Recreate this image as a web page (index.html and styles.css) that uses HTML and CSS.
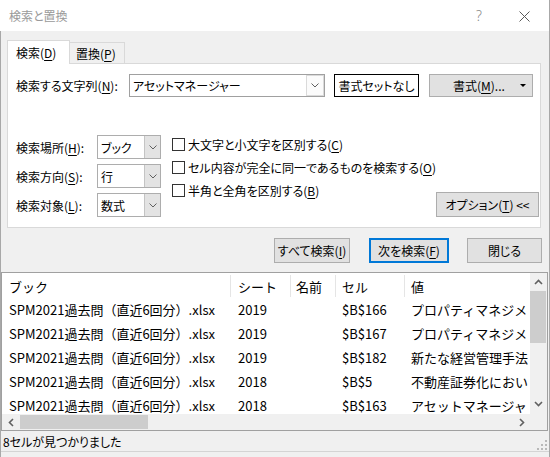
FILE: index.html
```html
<!DOCTYPE html>
<html lang="ja">
<head>
<meta charset="utf-8">
<title>検索と置換</title>
<link rel="stylesheet" href="styles.css">
</head>
<body>
<div class="window">
  <div class="titlebar">
    <span class="title">検索と置換</span>
    <span class="help">?</span>
    <span class="close"><svg width="11" height="11" viewBox="0 0 11 11"><path d="M0.5 0.5L10.5 10.5M10.5 0.5L0.5 10.5" stroke="#5a5a5a" stroke-width="1" fill="none"/></svg></span>
  </div>
  <div class="frame">
    <div class="dialog">
      <div class="tabs">
        <div class="tab active">検索(<u>D</u>)</div>
        <div class="tab">置換(<u>P</u>)</div>
      </div>
      <div class="panel">
        <div class="find-row">
          <span class="find-label">検索する文字列(<u>N</u>):</span>
          <div class="combo combo-find">
            <span class="combo-text">アセットマネージャー</span>
            <span class="combo-btn"><svg width="8" height="5" viewBox="0 0 8 5"><polyline points="0.5,0.5 4,4 7.5,0.5" stroke="#606060" stroke-width="1" fill="none"/></svg></span>
          </div>
          <button class="btn btn-noformat">書式セットなし</button>
          <button class="btn btn-format"><span class="fmt-text">書式(<u>M</u>)...</span><svg class="fmt-tri" width="6" height="3" viewBox="0 0 6 3"><polygon points="0,0 6,0 3,3" fill="#000"/></svg></button>
        </div>
        <div class="options">
          <div class="selects">
            <span class="sel-label">検索場所(<u>H</u>):</span>
            <div class="combo combo-sm"><span class="combo-text">ブック</span><span class="combo-btn"><svg width="8" height="5" viewBox="0 0 8 5"><polyline points="0.5,0.5 4,4 7.5,0.5" stroke="#606060" stroke-width="1" fill="none"/></svg></span></div>
            <span class="sel-label">検索方向(<u>S</u>):</span>
            <div class="combo combo-sm"><span class="combo-text">行</span><span class="combo-btn"><svg width="8" height="5" viewBox="0 0 8 5"><polyline points="0.5,0.5 4,4 7.5,0.5" stroke="#606060" stroke-width="1" fill="none"/></svg></span></div>
            <span class="sel-label">検索対象(<u>L</u>):</span>
            <div class="combo combo-sm"><span class="combo-text">数式</span><span class="combo-btn"><svg width="8" height="5" viewBox="0 0 8 5"><polyline points="0.5,0.5 4,4 7.5,0.5" stroke="#606060" stroke-width="1" fill="none"/></svg></span></div>
          </div>
          <div class="checks">
            <div class="check"><span class="box"></span>大文字と小文字を区別する(<u>C</u>)</div>
            <div class="check"><span class="box"></span>セル内容が完全に同一であるものを検索する(<u>O</u>)</div>
            <div class="check"><span class="box"></span>半角と全角を区別する(<u>B</u>)</div>
          </div>
          <button class="btn btn-options">オプション(<u>T</u>) &lt;&lt;</button>
        </div>
      </div>
      <div class="actions">
        <button class="btn btn-all">すべて検索(<u>I</u>)</button>
        <button class="btn btn-next">次を検索(<u>F</u>)</button>
        <button class="btn btn-close">閉じる</button>
      </div>
    </div>
    <div class="results">
      <div class="list-area">
        <div class="list-content">
          <div class="lrow lhead">
            <span class="c1">ブック</span><span class="c2">シート</span><span class="c3">名前</span><span class="c4">セル</span><span class="c5">値</span>
          </div>
          <div class="lrow">
            <span class="c1">SPM2021過去問（直近6回分）.xlsx</span><span class="c2">2019</span><span class="c3"></span><span class="c4">$B$166</span><span class="c5">プロパティマネジメ</span>
          </div>
          <div class="lrow">
            <span class="c1">SPM2021過去問（直近6回分）.xlsx</span><span class="c2">2019</span><span class="c3"></span><span class="c4">$B$167</span><span class="c5">プロパティマネジメ</span>
          </div>
          <div class="lrow">
            <span class="c1">SPM2021過去問（直近6回分）.xlsx</span><span class="c2">2019</span><span class="c3"></span><span class="c4">$B$182</span><span class="c5">新たな経営管理手法</span>
          </div>
          <div class="lrow">
            <span class="c1">SPM2021過去問（直近6回分）.xlsx</span><span class="c2">2018</span><span class="c3"></span><span class="c4">$B$5</span><span class="c5">不動産証券化におい</span>
          </div>
          <div class="lrow">
            <span class="c1">SPM2021過去問（直近6回分）.xlsx</span><span class="c2">2018</span><span class="c3"></span><span class="c4">$B$163</span><span class="c5">アセットマネージャ</span>
          </div>
        </div>
        <div class="vscroll">
          <span class="sarrow"><svg width="9" height="6" viewBox="0 0 9 6"><polyline points="1,5 4.5,1.5 8,5" stroke="#606060" stroke-width="1.6" fill="none"/></svg></span>
          <span class="vthumb"></span>
          <span class="sarrow sarrow-down"><svg width="9" height="6" viewBox="0 0 9 6"><polyline points="1,1 4.5,4.5 8,1" stroke="#606060" stroke-width="1.6" fill="none"/></svg></span>
        </div>
      </div>
      <div class="hscroll-row">
        <div class="hscroll">
          <span class="harrow"><svg width="6" height="9" viewBox="0 0 6 9"><polyline points="5,1 1.5,4.5 5,8" stroke="#606060" stroke-width="1.6" fill="none"/></svg></span>
          <span class="hthumb"></span>
          <span class="harrow harrow-right"><svg width="6" height="9" viewBox="0 0 6 9"><polyline points="1,1 4.5,4.5 1,8" stroke="#606060" stroke-width="1.6" fill="none"/></svg></span>
        </div>
        <div class="corner"></div>
      </div>
    </div>
    <div class="status">
      <span class="status-text">8セルが見つかりました</span>
      <svg class="grip" width="10" height="10" viewBox="0 0 10 10">
        <rect x="8" y="0" width="2" height="2" fill="#b8b8b8"/>
        <rect x="4" y="4" width="2" height="2" fill="#b8b8b8"/>
        <rect x="8" y="4" width="2" height="2" fill="#b8b8b8"/>
        <rect x="0" y="8" width="2" height="2" fill="#b8b8b8"/>
        <rect x="4" y="8" width="2" height="2" fill="#b8b8b8"/>
        <rect x="8" y="8" width="2" height="2" fill="#b8b8b8"/>
      </svg>
    </div>
  </div>
</div>
</body>
</html>
```
FILE: styles.css
```css
* { box-sizing: border-box; }
html, body { margin: 0; padding: 0; }
body {
  width: 550px;
  height: 457px;
  overflow: hidden;
  background: #f0f0f0;
  font-family: "Noto Sans CJK JP", "Noto Sans", sans-serif;
  font-size: 12px;
  color: #000;
  font-feature-settings: "palt";
}
u { text-decoration: underline; text-underline-offset: 2px; text-decoration-thickness: 1px; }

.window {
  width: 550px;
  height: 457px;
  border-right: 1px solid #a8a8a8;
  display: flex;
  flex-direction: column;
}

.titlebar {
  height: 31px;
  flex: none;
  background: #fff;
  display: flex;
  align-items: center;
  padding-left: 9px;
}
.title { color: #9a9a9a; font-size: 12px; }
.help {
  margin-left: auto;
  width: 14px;
  text-align: center;
  color: #8a8a8a;
  font-family: "Noto Sans", sans-serif;
  font-size: 14px;
  font-weight: 300;
  margin-right: 33px;
}
.close { display: flex; width: 11px; height: 11px; margin-right: 19px; margin-top: 1px; }

.frame {
  flex: 1;
  border-left: 1px solid #a8a8a8;
  display: flex;
  flex-direction: column;
  min-height: 0;
}
.dialog { padding: 9px 8px 0 6px; }

.tabs { display: flex; align-items: flex-end; height: 23px; }
.tab {
  height: 21px;
  border: 1px solid #d9d9d9;
  border-bottom: none;
  background: #f0f0f0;
  display: flex;
  align-items: center;
  padding-left: 8px;
  width: 63px;
}
.tab.active {
  height: 24px;
  margin-bottom: -1px;
  background: #fff;
  position: relative;
  z-index: 1;
}
.tab + .tab { border-left: none; width: 55px; padding-left: 6px; padding-top: 1px; }

.panel {
  background: #fff;
  border: 1px solid #d9d9d9;
  height: 165px;
  padding: 10px 0 0 8px;
}

.find-row { display: flex; align-items: center; height: 23px; }
.find-label { width: 113px; flex: none; }

.combo {
  display: flex;
  align-items: stretch;
  background: #fff;
  border: 1px solid #a0a0a0;
  flex: none;
}
.combo-text { flex: 1; display: flex; align-items: center; padding-left: 3px; white-space: nowrap; overflow: hidden; }
.combo-btn { display: flex; align-items: center; justify-content: center; }
.combo-find { width: 196px; height: 23px; }
.combo-find .combo-btn { width: 18px; border: 1px solid #dadada; background: #fbfbfb; }
.combo-sm { width: 64px; height: 24px; border-color: #adadad; }
.combo-sm .combo-btn { width: 16px; background: #e3e3e3; border-left: 1px solid #c4c4c4; }

.btn {
  font-family: inherit;
  font-size: 12px;
  font-feature-settings: "palt";
  color: #000;
  padding: 0;
  margin: 0;
  background: #e1e1e1;
  border: 1px solid #adadad;
  display: flex;
  align-items: center;
  justify-content: center;
  flex: none;
}
.btn-noformat { margin-left: 9px; width: 85px; height: 23px; background: #fff; border-color: #000; }
.btn-format { margin-left: 10px; width: 104px; height: 23px; justify-content: flex-start; padding-left: 23px; }
.fmt-tri { margin-left: auto; margin-right: 6px; }

.options { display: flex; align-items: flex-start; margin-top: 38px; height: 82px; }
.selects {
  display: grid;
  grid-template-columns: 81px 64px;
  grid-auto-rows: 24px;
  row-gap: 5px;
  align-items: center;
}
.checks { margin-left: 11px; margin-top: -2px; display: flex; flex-direction: column; }
.check { height: 23px; display: flex; align-items: center; white-space: nowrap; }
.box { width: 13px; height: 13px; border: 1px solid #333; background: #fff; margin-right: 3px; flex: none; }
.btn-options { align-self: flex-end; margin-left: auto; margin-right: 7px; width: 103px; height: 25px; }

.actions { display: flex; justify-content: flex-end; margin-top: 10px; margin-right: -1px; gap: 19px; }
.actions .btn { height: 25px; }
.btn-all { width: 76px; }
.btn-next { width: 80px; border: 2px solid #0078d7; margin-right: -1px; }
.btn-close { width: 75px; }

.results {
  margin-top: 9px;
  margin-right: 1px;
  height: 159px;
  border: 1px solid #a0a0a0;
  display: flex;
  flex-direction: column;
  flex: none;
}
.list-area { height: 141px; display: flex; }
.list-content { flex: 1; background: #fff; overflow: hidden; font-size: 13px; font-feature-settings: normal; }
.lrow {
  display: grid;
  grid-template-columns: 229px 60px 45px 69px 1fr;
  height: 24px;
  align-items: stretch;
}
.lrow span { display: flex; align-items: center; white-space: nowrap; overflow: hidden; }
.lhead span { border-right: 1px solid #e5e5e5; margin: 2px 0 0 0; }
.lhead .c5 { border-right: none; }
.c1 { padding-left: 7px; }
.c2 { padding-left: 7px; }
.c3 { padding-left: 5px; }
.c4 { padding-left: 6px; }
.c5 { padding-left: 6px; }

.vscroll {
  width: 17px;
  background: #f0f0f0;
  display: flex;
  flex-direction: column;
  align-items: center;
}
.sarrow { height: 17px; width: 17px; display: flex; align-items: center; justify-content: center; flex: none; }
.vthumb { width: 16px; height: 52px; background: #cdcdcd; margin-top: 1px; margin-left: -1px; }
.sarrow-down { margin-top: auto; margin-bottom: 2px; }

.hscroll-row { height: 16px; display: flex; }
.hscroll { flex: 1; background: #f0f0f0; display: flex; align-items: center; }
.harrow { width: 17px; height: 16px; display: flex; align-items: center; justify-content: center; flex: none; }
.hthumb { width: 128px; height: 14px; background: #cdcdcd; margin-left: 1px; }
.harrow-right { margin-left: auto; }
.corner { width: 17px; background: #f0f0f0; }

.status {
  height: 21px;
  display: flex;
  align-items: center;
  padding-left: 2px;
  border-bottom: 1px solid #d4d4d4;
}
.grip { margin-left: auto; align-self: flex-end; margin-right: 2px; margin-bottom: 1px; }
```
